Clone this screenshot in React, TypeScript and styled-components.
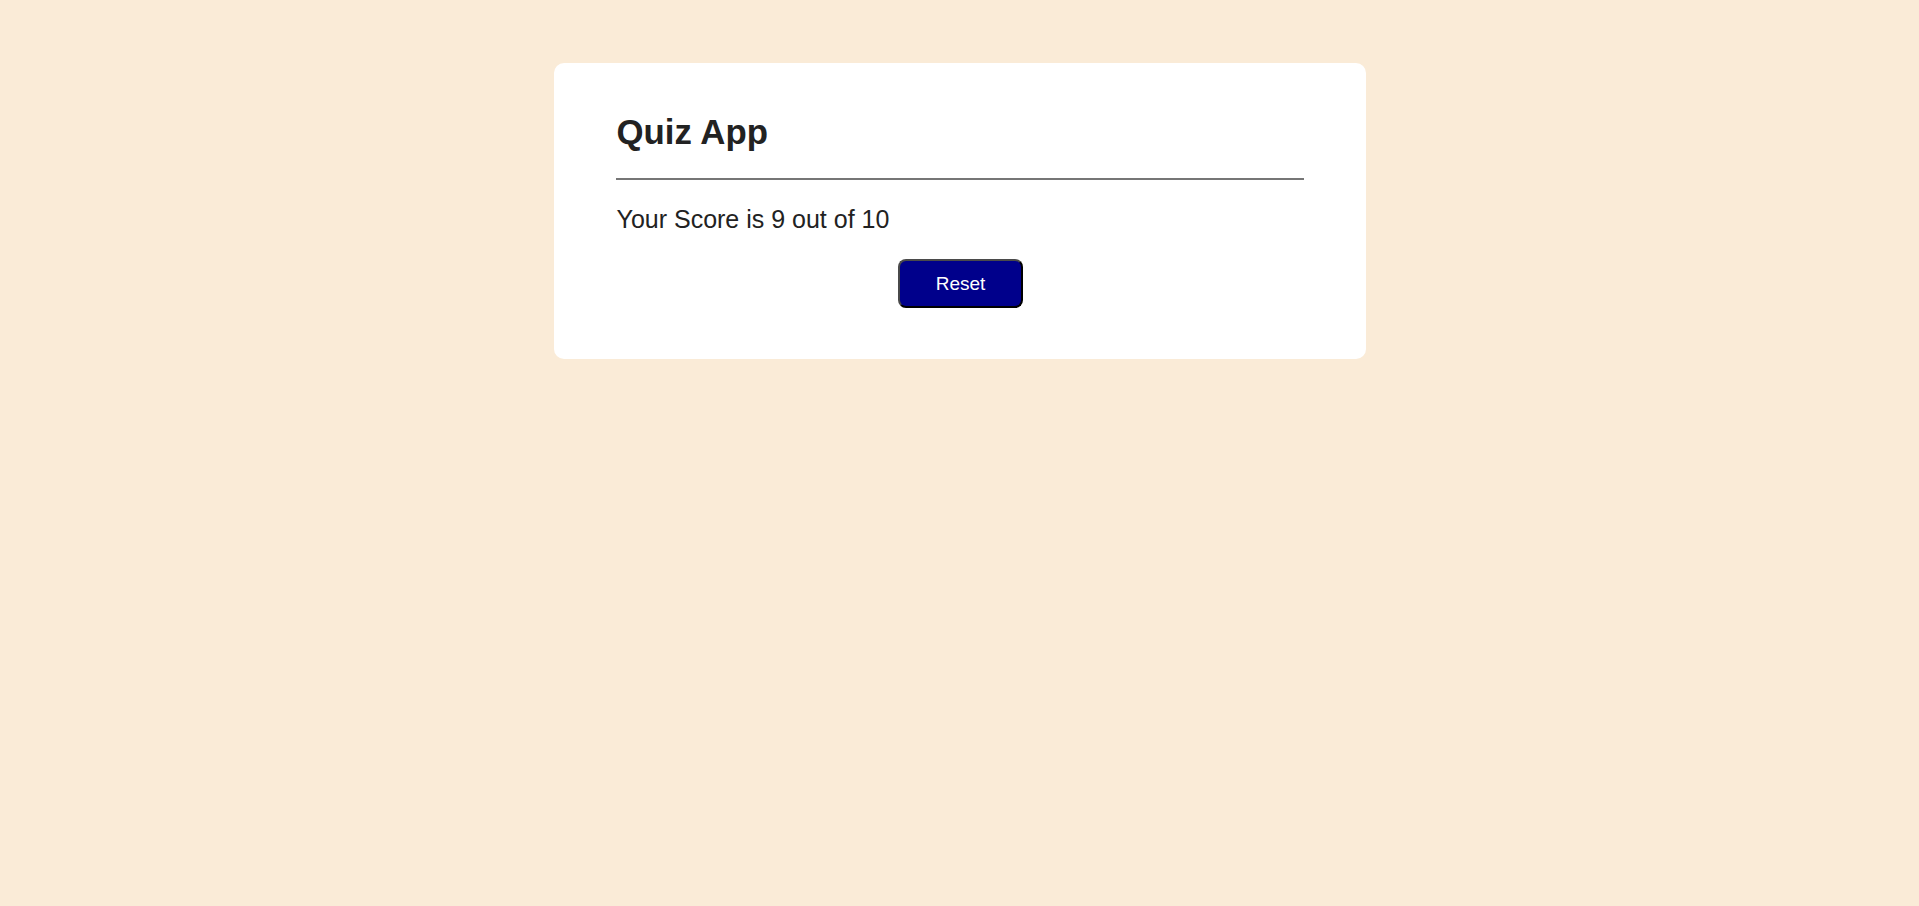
import React from "react";
import styled, { createGlobalStyle } from "styled-components";

const GlobalStyle = createGlobalStyle`
  html, body {
    margin: 0;
    padding: 0;
    background: #faebd7;
    font-family: "Liberation Sans", Arial, sans-serif;
  }
`;

const Page = styled.div`
  min-height: 906px;
  padding-top: 63px;
  box-sizing: border-box;
  display: flex;
  justify-content: center;
  align-items: flex-start;
`;

const Card = styled.div`
  width: 812px;
  box-sizing: border-box;
  background: #ffffff;
  border-radius: 10px;
  padding: 49px 62px 51px;
  display: flex;
  flex-direction: column;
`;

const Title = styled.h1`
  margin: 0;
  padding-left: 1px;
  font-size: 34.8px;
  line-height: 39px;
  font-weight: 700;
  color: #222222;
`;

const Divider = styled.hr`
  margin: 27px 0 25px;
  height: 0;
  border: none;
  border-top: 2px solid #767676;
`;

const Score = styled.p`
  margin: 0;
  padding-left: 1px;
  font-size: 25px;
  line-height: 28px;
  color: #222222;
`;

const Actions = styled.div`
  display: flex;
  justify-content: center;
  margin-top: 26px;
`;

const Button = styled.button`
  width: 125px;
  height: 49px;
  box-sizing: border-box;
  background: #00008b;
  color: #ffffff;
  font-family: "Liberation Sans", Arial, sans-serif;
  font-size: 19px;
  border-radius: 8px;
  border-width: 2px;
  border-style: solid;
  border-color: #4a4a4a #000000 #000000 #4a4a4a;
  cursor: pointer;
  padding: 0;
  transform: translateX(1px);
`;

export default function App() {
  return (
    <>
      <GlobalStyle />
      <Page>
        <Card>
          <Title>Quiz App</Title>
          <Divider />
          <Score>Your Score is 9 out of 10</Score>
          <Actions>
            <Button>Reset</Button>
          </Actions>
        </Card>
      </Page>
    </>
  );
}
